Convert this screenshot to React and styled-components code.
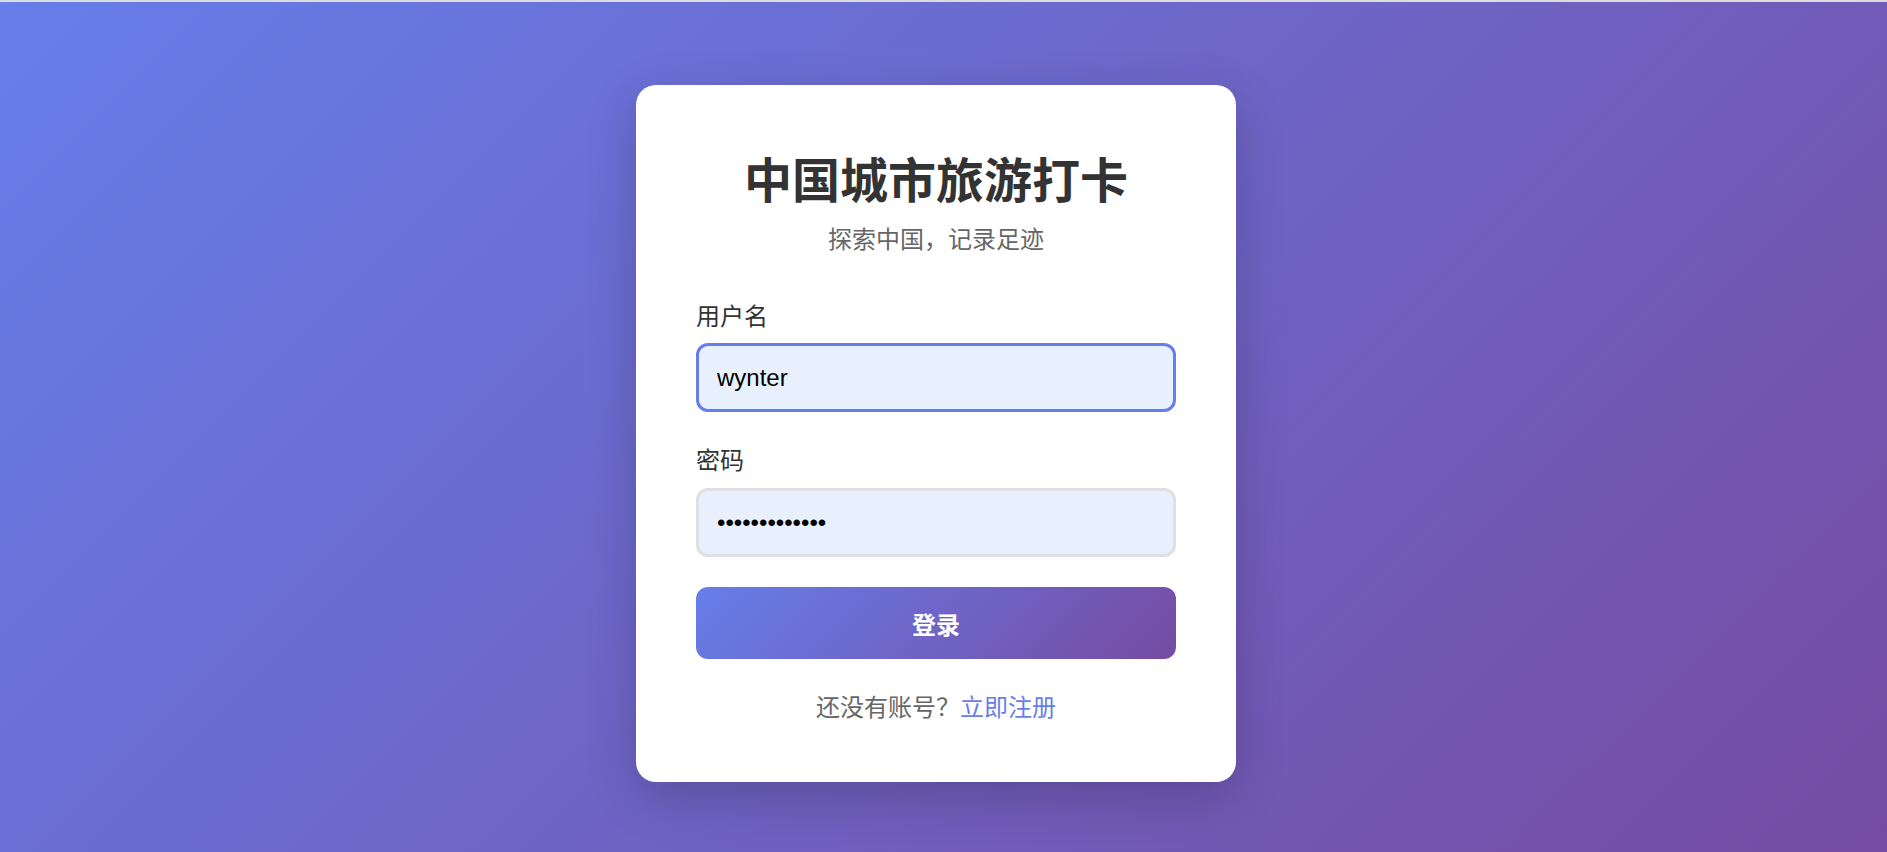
import React from 'react';
import styled, { createGlobalStyle } from 'styled-components';

const GlobalStyle = createGlobalStyle`
  * {
    box-sizing: border-box;
  }

  body {
    margin: 0;
    font-family: "Liberation Sans", "Noto Sans CJK SC", sans-serif;
  }
`;

const StyledPage = styled.div`
  min-height: 100vh;
  border-top: 2px solid #dcdcdc;
  padding: 13px 15px 0 0;
  display: flex;
  align-items: center;
  justify-content: center;
  background: linear-gradient(135deg, #667eea 0%, #764ba2 100%);
`;

const StyledCard = styled.div`
  width: 600px;
  padding: 60px 60px 56px;
  background: #fff;
  border-radius: 20px;
  box-shadow: 0 15px 50px rgba(0, 0, 0, 0.2);
`;

const StyledHeader = styled.div`
  text-align: center;
  margin-bottom: 42px;

  h1 {
    margin: 0 0 6px;
    padding-top: 2px;
    font-size: 48px;
    line-height: 1.45;
    font-weight: 700;
    color: #333;
  }

  p {
    margin: 0;
    font-size: 24px;
    line-height: 1.45;
    color: #666;
  }
`;

const StyledGroup = styled.div`
  margin-bottom: ${({ $last }) => ($last ? '30px' : '32px')};

  label {
    display: block;
    margin-bottom: 9px;
    font-size: 24px;
    line-height: 1.45;
    color: #333;
  }
`;

const StyledInput = styled.input`
  display: block;
  width: 100%;
  height: 69px;
  padding: 0 18px;
  font-family: "Liberation Sans", sans-serif;
  font-size: 24px;
  color: #000;
  background: #e8f0fe;
  border: 3px solid ${({ $focused }) => ($focused ? '#667eea' : '#e0e0e0')};
  border-radius: 12px;
  outline: none;
`;

const StyledButton = styled.button`
  display: block;
  width: 100%;
  height: 72px;
  border: none;
  border-radius: 12px;
  background: linear-gradient(135deg, #667eea 0%, #764ba2 100%);
  color: #fff;
  font-family: "Liberation Sans", "Noto Sans CJK SC", sans-serif;
  font-size: 24px;
  font-weight: 700;
  cursor: pointer;
`;

const StyledFooter = styled.p`
  margin: 32px 0 0;
  text-align: center;
  font-size: 24px;
  line-height: 1.45;
  color: #666;

  a {
    color: #667eea;
    text-decoration: none;
  }
`;

const App = () => (
  <>
    <GlobalStyle />
    <StyledPage>
      <StyledCard>
        <StyledHeader>
          <h1>中国城市旅游打卡</h1>
          <p>探索中国，记录足迹</p>
        </StyledHeader>

        <form onSubmit={e => e.preventDefault()}>
          <StyledGroup>
            <label htmlFor="username">用户名</label>
            <StyledInput id="username" type="text" defaultValue="wynter" $focused />
          </StyledGroup>

          <StyledGroup $last>
            <label htmlFor="password">密码</label>
            <StyledInput id="password" type="password" defaultValue="wynter1234567" />
          </StyledGroup>

          <StyledButton type="submit">登录</StyledButton>
        </form>

        <StyledFooter>
          还没有账号？<a href="#register">立即注册</a>
        </StyledFooter>
      </StyledCard>
    </StyledPage>
  </>
);

export default App;
